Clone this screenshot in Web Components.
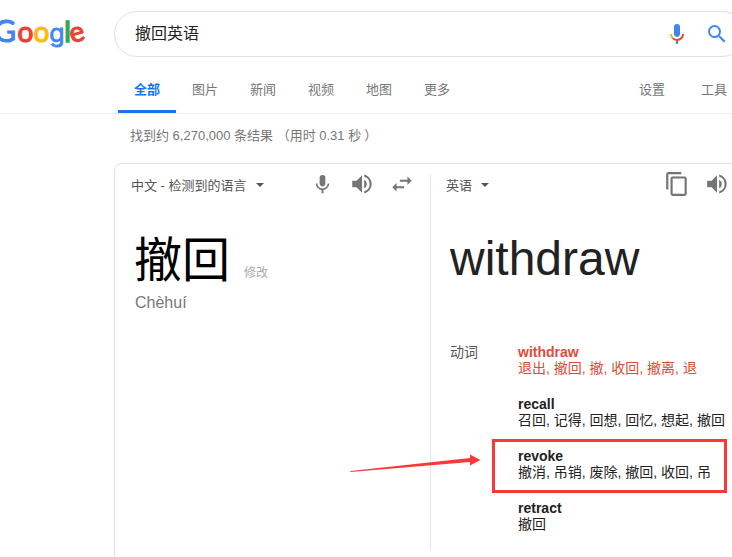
<!DOCTYPE html>
<html lang="zh-CN">
<head>
<meta charset="utf-8">
<title>撤回英语</title>
<style>
html,body{margin:0;height:557px;overflow:hidden;background:#fff}
body{font-family:"Liberation Sans","Noto Sans CJK SC",sans-serif}
</style>
</head>
<body>
<search-page></search-page>
<script>
function define(name, html) {
  const t = document.createElement('template');
  t.innerHTML = html;
  customElements.define(name, class extends HTMLElement {
    constructor() {
      super();
      this.attachShadow({mode: 'open'}).append(t.content.cloneNode(true));
    }
  });
}

define('brand-logo', `<style>:host{display:block;flex:none;width:114px;height:46px;overflow:hidden}svg{display:block}text{font-family:Lato,sans-serif;font-size:28px;stroke-width:1.2}</style>
<svg width="114" height="46" viewBox="0 11 114 46" role="img" aria-label="Google">
<text x="-6.500" y="41.500" style="font-size:31px;stroke-width:1" fill="#4285f4" stroke="#4285f4">G</text>
<text x="17.400" y="41.500" fill="#ea4335" stroke="#ea4335">o</text>
<text x="33.600" y="41.500" fill="#fbbc05" stroke="#fbbc05">o</text>
<text x="49.300" y="41.500" style="font-family:Inter,sans-serif;font-size:25px;stroke-width:.8" fill="#4285f4" stroke="#4285f4">g</text>
<text x="64.300" y="41.500" style="stroke-width:1.500" fill="#34a853" stroke="#34a853">l</text>
<text x="69.800" y="41.500" fill="#ea4335" stroke="#ea4335" transform="rotate(-16 77 34.500)">e</text>
</svg>`);

const icons = {
  voice: [24, 24, '<path fill="#4285f4" d="M12 15c1.66 0 3-1.31 3-2.97V5a3 3 0 0 0-6 0v7.03C9 13.69 10.34 15 12 15z"/><path fill="#34a853" d="M11 18.08h2V22h-2z"/><path fill="#fbbc05" d="M7.05 16.87C5.78 15.6 5 13.94 5 12h2c0 1.45.56 2.42 1.47 3.38z"/><path fill="#ea4335" d="M12 16.93a4.97 4.97 0 0 1-3.54-1.55l-1.41 1.49A6.97 6.97 0 0 0 12 18.99c3.87 0 7-3.13 7-7h-2c0 2.78-2.24 4.94-5 4.94z"/>'],
  search: [24, 24, '<path fill="#4285f4" d="M15.5 14h-.79l-.28-.27A6.47 6.47 0 0 0 16 9.5 6.5 6.5 0 1 0 9.5 16c1.61 0 3.09-.59 4.23-1.57l.27.28v.79l5 4.99L20.49 19zm-6 0C7.01 14 5 11.99 5 9.5S7.01 5 9.5 5 14 7.01 14 9.5 11.99 14 9.5 14z"/>'],
  mic: [24, 24, '<path d="M12 14c1.66 0 2.99-1.34 2.99-3L15 5a3 3 0 0 0-6 0v6c0 1.66 1.34 3 3 3zm5.3-3c0 3-2.54 5.1-5.3 5.1S6.7 14 6.7 11H5c0 3.41 2.72 6.23 6 6.72V21h2v-3.28c3.28-.48 6-3.3 6-6.72z"/>'],
  speaker: [24, 24, '<path d="M3 9v6h4l5 5V4L7 9zm13.5 3A4.5 4.5 0 0 0 14 7.97v8.05A4.5 4.5 0 0 0 16.5 12zM14 3.23v2.06a7 7 0 0 1 0 13.42v2.06a9 9 0 0 0 0-17.54z"/>'],
  swap: [24, 24, '<path d="M6.99 11 3 15l3.99 4v-3H14v-2H6.99zM21 9l-3.99-4v3H10v2h7.01v3z"/>'],
  copy: [24, 24, '<path d="M16 1H4a2 2 0 0 0-2 2v14h2V3h12zm3 4H8a2 2 0 0 0-2 2v14a2 2 0 0 0 2 2h11a2 2 0 0 0 2-2V7a2 2 0 0 0-2-2zm0 16H8V7h11z"/>'],
  caret: [8, 4, '<path d="M0 0h8L4 4z"/>']
};
customElements.define('ui-icon', class extends HTMLElement {
  constructor() {
    super();
    const [w, h, body] = icons[this.getAttribute('name')];
    this.attachShadow({mode: 'open'}).innerHTML =
      `<style>:host{display:block;flex:none;color:#757575;width:24px;height:24px}svg{display:block;width:100%;height:100%;fill:currentColor}</style><svg viewBox="0 0 ${w} ${h}">${body}</svg>`;
  }
});

define('search-box', `<style>:host{display:flex;box-sizing:border-box;flex:none;width:631px;height:46px;border:1px solid #dfe1e5;border-radius:23px;align-items:center;padding:0 15px 0 20px;color:#222;font-size:16px;line-height:24px}
.q{flex:1;padding-bottom:1px}.i{display:flex;gap:16px}</style><div class="q"><slot></slot></div><div class="i"><ui-icon name="voice"></ui-icon><ui-icon name="search"></ui-icon></div>`);

define('nav-tab', `<style>:host{display:block;box-sizing:border-box;flex:none;width:58px;height:45px;padding-top:13px;text-align:center;font-size:13px;line-height:18px;color:#777;border-bottom:3px solid transparent}
:host([active]){color:#1a73e8;font-weight:bold;border-color:#1a73e8}:host([tool]){width:62px}</style><slot></slot>`);

define('nav-bar', `<style>:host{display:flex;width:745px;box-sizing:border-box;height:46px;margin-top:11px;padding-left:118px;border-bottom:1px solid #ebebeb}.gap{width:155px;flex:none}</style>
<slot></slot><div class="gap"></div><slot name="tools"></slot>`);

define('lang-bar', `<style>:host{display:flex;align-items:center;height:40px;font-size:13px;color:#555;white-space:nowrap}
.n{display:flex;align-items:center;gap:9px;flex:1}.n ui-icon{width:8px;height:4px;color:#555;margin-top:1px}.t{display:flex;align-items:center}</style>
<div class="n"><span><slot></slot></span><ui-icon name="caret"></ui-icon></div><div class="t"><slot name="tools"></slot></div>`);

define('dict-entry', `<style>:host{display:block;position:relative;height:52px;font-size:14px;line-height:16px;color:#222;white-space:nowrap}:host([hot]){color:#dd4b39}
b,div{display:block;height:16px}
:host([marked])::before{content:"";position:absolute;left:-26px;top:-9px;width:235px;height:54px;box-sizing:border-box;border:3px solid #fb3838}</style>
<b><slot name="word"></slot></b><div><slot></slot></div>`);

define('translate-card', `<style>:host{display:flex;box-sizing:border-box;width:645px;height:430px;border:1px solid #dfe1e5;border-radius:8px;margin:16px 0 0 114px}
.l{width:315px;flex:none;box-sizing:border-box}.r{flex:1;border-left:1px solid #e5e5e5;height:375px;margin-top:11px;box-sizing:border-box}
.l lang-bar{padding:0 15px 0 16px}.r lang-bar{margin-top:-11px;padding:0 28px 0 15px}
.src{display:flex;align-items:baseline;margin:25px 0 0 19px;font-size:48px;line-height:64px;height:64px;color:#000;gap:14px}.src small{font-size:12px;color:#aaa}
.py{margin:0 0 0 20px;font-size:16px;line-height:20px;color:#777}
.big{margin:27px 0 0 19px;font-size:48px;line-height:56px;color:#222}
.dict{display:grid;grid-template-columns:68px 1fr;margin:57px 0 0 19px;font-size:14px;line-height:16px;color:#555}
.l ui-icon[name=mic]{margin-right:15px;width:23px;height:23px}ui-icon[name=speaker]{width:26px;height:26px}.l ui-icon[name=speaker]{margin-right:14px}.l ui-icon[name=swap]{width:26px;height:26px}
.r ui-icon[name=copy]{width:26px;height:26px;margin-right:14px}
</style>
<div class="l"><lang-bar>中文 - 检测到的语言<ui-icon slot="tools" name="mic"></ui-icon><ui-icon slot="tools" name="speaker"></ui-icon><ui-icon slot="tools" name="swap"></ui-icon></lang-bar>
<div class="src"><span>撤回</span><small>修改</small></div><div class="py">Chèhuí</div></div>
<div class="r"><lang-bar>英语<ui-icon slot="tools" name="copy"></ui-icon><ui-icon slot="tools" name="speaker"></ui-icon></lang-bar>
<div class="big">withdraw</div>
<div class="dict"><span>动词</span><div>
<dict-entry hot><span slot="word">withdraw</span>退出, 撤回, 撤, 收回, 撤离, 退</dict-entry>
<dict-entry><span slot="word">recall</span>召回, 记得, 回想, 回忆, 想起, 撤回</dict-entry>
<dict-entry marked><span slot="word">revoke</span>撤消, 吊销, 废除, 撤回, 收回, 吊</dict-entry>
<dict-entry><span slot="word">retract</span>撤回</dict-entry></div></div></div>`);

define('pointer-arrow', `<style>:host{position:absolute;left:350px;top:450px;width:132px;height:24px}svg{display:block}</style>
<svg width="132" height="24"><path fill="#fb3838" d="M.5 21 120 8V4.500L130.500 10 120 15.500V12L.5 22z"/></svg>`);

define('search-page', `<style>:host{display:block;position:relative;width:732px;height:557px;overflow:hidden;background:#fff}
header{display:flex;padding-top:11px}.stats{margin:13px 0 0 130px;font-size:13px;line-height:18px;height:20px;color:#777;white-space:nowrap}.stats span{margin-left:3px}</style>
<header><brand-logo></brand-logo><search-box>撤回英语</search-box></header>
<nav-bar><nav-tab active>全部</nav-tab><nav-tab>图片</nav-tab><nav-tab>新闻</nav-tab><nav-tab>视频</nav-tab><nav-tab>地图</nav-tab><nav-tab>更多</nav-tab><nav-tab slot="tools" tool>设置</nav-tab><nav-tab slot="tools" tool>工具</nav-tab></nav-bar>
<div class="stats">找到约 6,270,000 条结果 （用时 0.31 秒<span>）</span></div>
<translate-card></translate-card>
<pointer-arrow></pointer-arrow>`);
</script>
</body>
</html>
